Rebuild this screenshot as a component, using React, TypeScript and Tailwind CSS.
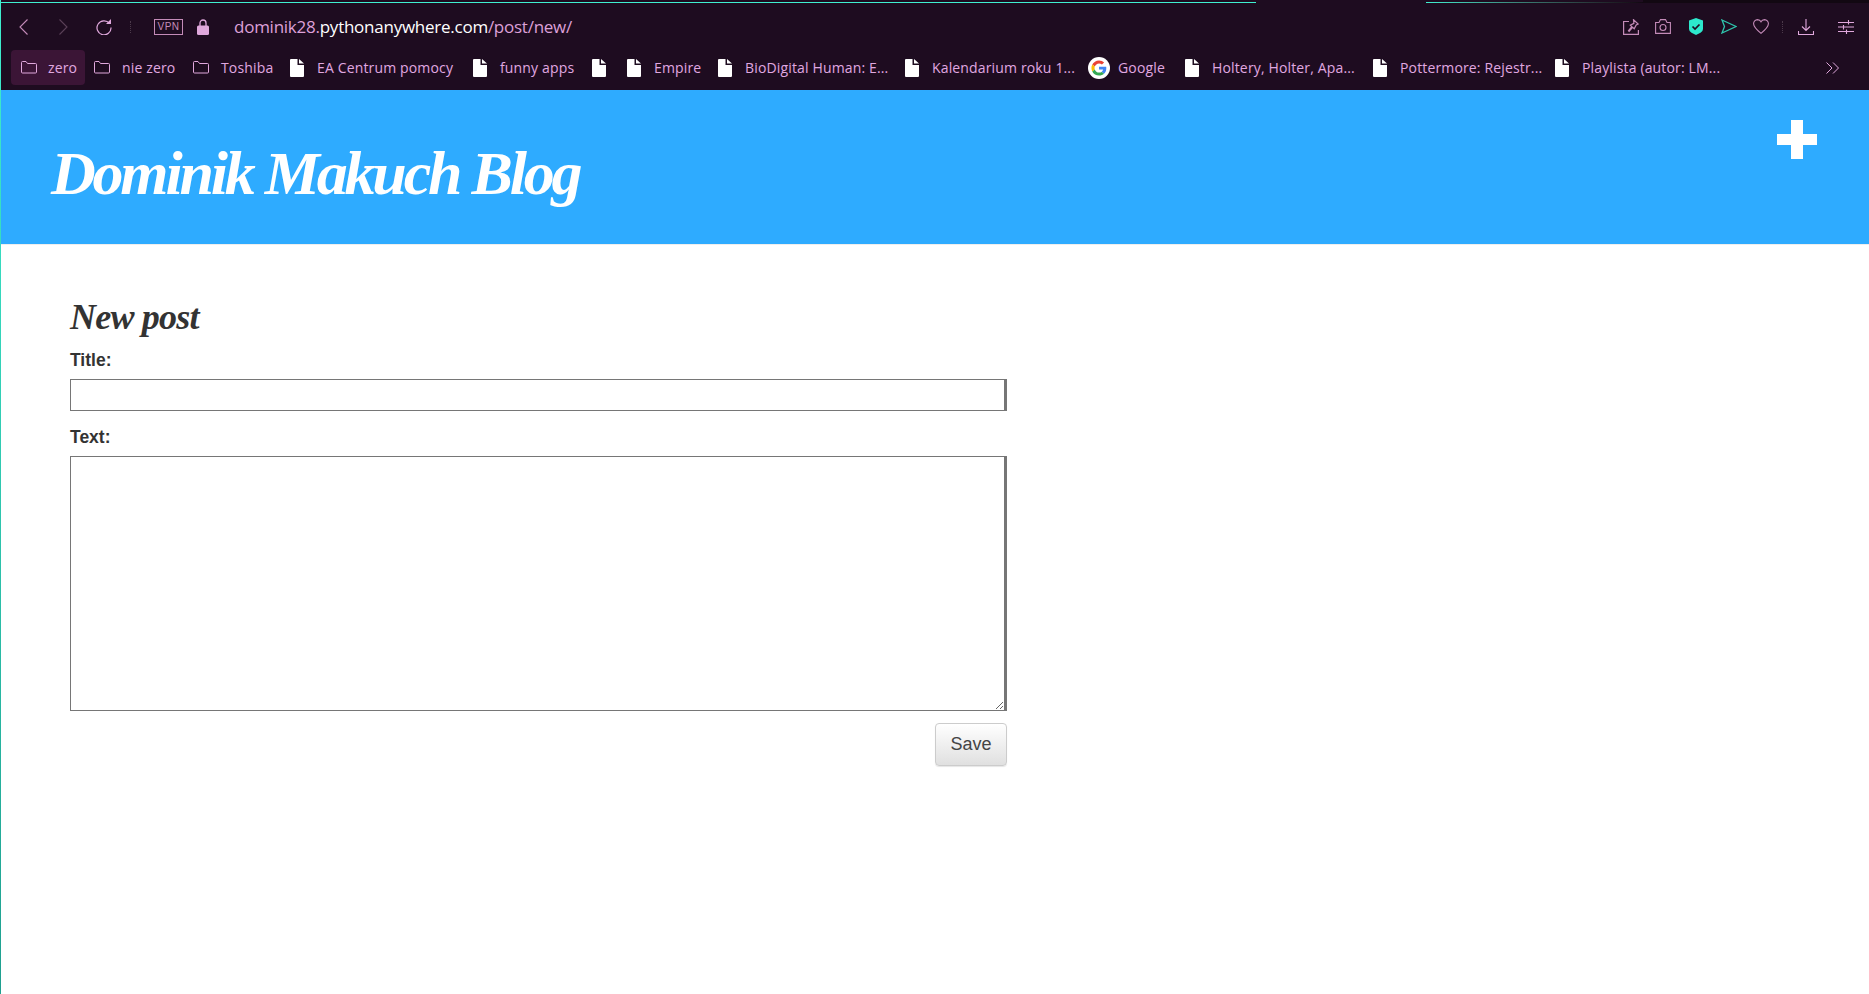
const bookmarks = [
  { label: "EA Centrum pomocy", w: "w-[183px]" },
  { label: "funny apps", w: "w-[119px]" },
  { label: "", w: "w-[35px]" },
  { label: "Empire", w: "w-[91px]" },
  { label: "BioDigital Human: E...", w: "w-[187px]" },
  { label: "Kalendarium roku 1...", w: "w-[183px]" },
];

const bookmarksEnd = [
  { label: "Holtery, Holter, Apa...", w: "w-[188px]" },
  { label: "Pottermore: Rejestr...", w: "w-[182px]" },
  { label: "Playlista (autor: LM...", w: "w-[170px]" },
];

function FileIcon() {
  return (
    <svg width="14" height="18" viewBox="0 0 14 18" className="shrink-0">
      <path d="M1 0h6.500v6H14v11a1 1 0 0 1-1 1H1a1 1 0 0 1-1-1V1a1 1 0 0 1 1-1z" fill="#fff" />
      <path d="M9 0l5 4.500H9z" fill="#fff" />
    </svg>
  );
}

function FolderIcon() {
  return (
    <svg width="16" height="13" viewBox="0 0 16 13" fill="none" stroke="#e0a8dc" className="shrink-0">
      <path d="M.5 11V1.500a1 1 0 0 1 1-1h3.500l1.500 2h8a1 1 0 0 1 1 1V11a1 1 0 0 1-1 1h-13a1 1 0 0 1-1-1z" />
    </svg>
  );
}

function GoogleIcon() {
  return (
    <svg width="22" height="22" viewBox="0 0 48 48" className="shrink-0">
      <circle cx="24" cy="24" r="24" fill="#fff" />
      <g transform="translate(7.500 7.500) scale(0.69)">
        <path fill="#EA4335" d="M24 9.500c3.500 0 6.700 1.200 9.200 3.600l6.900-6.900C35.900 2.400 30.500 0 24 0 14.600 0 6.500 5.400 2.600 13.200l8 6.200C12.500 13.700 17.800 9.500 24 9.500z" />
        <path fill="#4285F4" d="M47 24.500c0-1.600-.1-3.100-.4-4.500H24v9h13c-.6 3-2.300 5.500-4.800 7.200l7.700 6C44.400 38.500 47 32 47 24.500z" />
        <path fill="#FBBC05" d="M10.600 28.600c-.5-1.400-.8-3-.8-4.600s.3-3.200.8-4.600l-8-6.200C.9 16.500 0 20.100 0 24s.9 7.500 2.600 10.800l8-6.200z" />
        <path fill="#34A853" d="M24 48c6.500 0 11.900-2.100 15.900-5.800l-7.700-6c-2.100 1.400-4.900 2.300-8.200 2.300-6.200 0-11.500-4.200-13.400-9.900l-8 6.200C6.500 42.600 14.600 48 24 48z" />
      </g>
    </svg>
  );
}

function Bookmark({ label, w }: { label: string; w: string }) {
  return (
    <div className={`flex items-center gap-[13px] shrink-0 ${w}`}>
      <FileIcon />
      {label && <span>{label}</span>}
    </div>
  );
}

function Dots() {
  return <div className="h-[12px] border-l border-dotted border-[#4c3a4b] shrink-0" />;
}

export default function App() {
  return (
    <div className="h-[994px] w-[1869px] flex overflow-hidden bg-white font-['Liberation_Sans',sans-serif]">
      <div className="w-px shrink-0 bg-gradient-to-b from-[#3ff0d0] to-[#1f9f8f]" />

      <div className="flex-1 min-w-0 flex flex-col">
        {/* browser chrome */}
        <div className="h-[90px] shrink-0 bg-[#1e0c20] flex flex-col font-['Open_Sans',sans-serif]">
          <div className="h-[3px] flex shrink-0 items-end">
            <div className="h-px w-[1255px] bg-[#3ff0d0]" />
            <div className="w-[170px]" />
            <div className="h-px w-[217px] bg-gradient-to-r from-[#3ff0d0] to-[#120812]" />
            <div className="h-[3px] flex-1 bg-[#120812]" />
          </div>

          <div className="h-[47px] flex items-center shrink-0">
            <svg width="9" height="16" viewBox="0 0 9 16" fill="none" stroke="#c48bb8" strokeWidth="1.100" className="ml-[18px] shrink-0">
              <path d="M8.500.5L1 8l7.500 7.500" />
            </svg>
            <svg width="9" height="16" viewBox="0 0 9 16" fill="none" stroke="#5b4058" strokeWidth="1.100" className="ml-[31px] shrink-0">
              <path d="M.5.5L8 8l-7.500 7.500" />
            </svg>
            <svg width="16" height="16" viewBox="0 0 16 16" fill="none" stroke="#e0a8dc" strokeWidth="1.200" className="ml-[28px] shrink-0">
              <path d="M13.500 4.500A7 7 0 1 0 15 8.500" />
              <path d="M10 5h5V0z" fill="#e0a8dc" stroke="none" />
            </svg>
            <div className="ml-[18px]"><Dots /></div>
            <span className="ml-[23px] w-[29px] h-[16px] shrink-0 border border-[#c48bb8] text-[#c48bb8] text-[10px] leading-[14px] tracking-[0.5px] text-center font-['Liberation_Sans',sans-serif]">VPN</span>
            <svg width="12" height="16" viewBox="0 0 12 16" className="ml-[14px] shrink-0">
              <path d="M3 7V4a3 3 0 0 1 6 0v3" fill="none" stroke="#e0a8dc" strokeWidth="1.300" />
              <rect x="0" y="6.500" width="12" height="9.500" rx="1.500" fill="#e0a8dc" />
            </svg>
            <div className="ml-[25px] text-[17px] tracking-[-0.25px] text-[#dca0d8]">
              dominik28.<span className="text-white">pythonanywhere.com</span>/post/new/
            </div>

            <div className="ml-auto flex items-center mr-[15px]">
              <svg width="16" height="16" viewBox="0 0 16 16" fill="none" stroke="#c48bb8" strokeWidth="1.200" className="shrink-0">
                <path d="M6 2.500H.6v12.900h14.800V11" />
                <path d="M10.500.8l4.700 4.200-2 1-2 3.700-1.600-1.400-3.500 4-.6-.6 3.300-4-1.500-1.500 3.600-1.900z" />
              </svg>
              <svg width="16" height="15" viewBox="0 0 16 15" fill="none" stroke="#c48bb8" strokeWidth="1.100" className="ml-[16px] shrink-0">
                <path d="M.6 3.500h3.400L5.500.6h5L12 3.500h3.400v10.900H.6z" />
                <circle cx="8" cy="8.500" r="3" />
              </svg>
              <svg width="14" height="17" viewBox="0 0 14 17" className="ml-[18px] shrink-0">
                <path d="M7 0l7 2.500V11q0 2.500-2.500 3.700L7 17l-4.500-2.300Q0 13.500 0 11V2.500z" fill="#2de8cc" />
                <path d="M3.500 8.500L6 11l4.500-4.500" fill="none" stroke="#1e0c20" strokeWidth="1.700" />
              </svg>
              <svg width="16" height="15" viewBox="0 0 16 15" fill="none" stroke="#2fc4ac" strokeWidth="1.300" className="ml-[18px] shrink-0">
                <path d="M1 1l14 6.500L1 14l2.500-6.500z" />
              </svg>
              <svg width="16" height="15" viewBox="0 0 16 15" fill="none" stroke="#c48bb8" strokeWidth="1.100" className="ml-[16px] shrink-0">
                <path d="M8 14.300C4 11 .6 8 .6 4.700A4 4 0 0 1 4.500.6C6 .6 7.300 1.400 8 2.800 8.700 1.400 10 .6 11.500.6a4 4 0 0 1 3.900 4.100C15.400 8 12 11 8 14.300z" />
              </svg>
              <div className="ml-[13px]"><Dots /></div>
              <svg width="16" height="16" viewBox="0 0 16 16" fill="none" stroke="#e0a8dc" strokeWidth="1.100" className="ml-[15px] shrink-0">
                <path d="M8 0v11M4 7.500L8 11.500l4-4M.5 12v3.500h15V12" />
              </svg>
              <svg width="16" height="14" viewBox="0 0 16 14" fill="none" stroke="#e0a8dc" strokeWidth="1.100" className="ml-[24px] shrink-0">
                <path d="M0 2.500h16M0 7h16M0 11.500h16M10.500 0v4.500M5.500 5v4.500M8.500 9.500V14" />
              </svg>
            </div>
          </div>

          <div className="h-[35px] flex items-center text-[14px] tracking-[0.15px] text-[#e0a8e0] whitespace-nowrap shrink-0">
            <div className="ml-[10px] h-[35px] w-[74px] rounded-[4px] bg-[#3b1536] flex items-center pl-[10px] gap-[11px] shrink-0">
              <FolderIcon />
              <span>zero</span>
            </div>
            <div className="ml-[9px] w-[99px] flex items-center gap-[12px] shrink-0">
              <FolderIcon />
              <span>nie zero</span>
            </div>
            <div className="w-[97px] flex items-center gap-[12px] shrink-0">
              <FolderIcon />
              <span>Toshiba</span>
            </div>
            {bookmarks.map((b, i) => (
              <Bookmark key={i} label={b.label} w={b.w} />
            ))}
            <div className="w-[97px] flex items-center gap-[8px] shrink-0">
              <GoogleIcon />
              <span>Google</span>
            </div>
            {bookmarksEnd.map((b) => (
              <Bookmark key={b.label} label={b.label} w={b.w} />
            ))}
            <svg width="13" height="12" viewBox="0 0 13 12" fill="none" stroke="#e0a8dc" className="ml-auto mr-[30px] shrink-0">
              <path d="M.5.5L6 6 .5 11.500M7 .5L12.500 6 7 11.500" />
            </svg>
          </div>
        </div>

        {/* page header */}
        <div className="h-[155px] shrink-0 bg-[#2eabff] border-b border-[#eeeeee] flex justify-between">
          <h1 className="ml-[50px] mt-[49px] text-[62px] leading-[68px] font-bold italic tracking-[-3.2px] text-white font-['Liberation_Serif',serif]">
            Dominik Makuch Blog
          </h1>
          <svg width="40" height="39" viewBox="0 0 40 39" className="mt-[30px] mr-[52px]" fill="#fff">
            <path d="M14 0h12v14h14v11H26v14H14V25H0V14h14z" />
          </svg>
        </div>

        {/* post form */}
        <form className="ml-[69px] w-[937px] mt-[52px] flex flex-col text-[#333333]">
          <h2 className="text-[36px] leading-[40px] font-bold italic tracking-[-0.8px] font-['Liberation_Serif',serif]">New post</h2>
          <label className="mt-[12px] text-[17.5px] leading-[22px] font-bold">Title:</label>
          <input className="mt-[8px] h-[32px] border border-[#767676] border-r-[3px] outline-none" />
          <label className="mt-[15px] text-[17.5px] leading-[22px] font-bold">Text:</label>
          <textarea className="mt-[8px] h-[255px] border border-[#767676] border-r-[3px] outline-none" />
          <button
            type="button"
            className="self-end mt-[12px] h-[43px] w-[72px] rounded-[4px] border border-[#cccccc] bg-gradient-to-b from-white to-[#e0e0e0] shadow-[0_1px_1px_rgba(0,0,0,0.1)] text-[18px] text-[#444444]"
          >
            Save
          </button>
        </form>
      </div>
    </div>
  );
}
